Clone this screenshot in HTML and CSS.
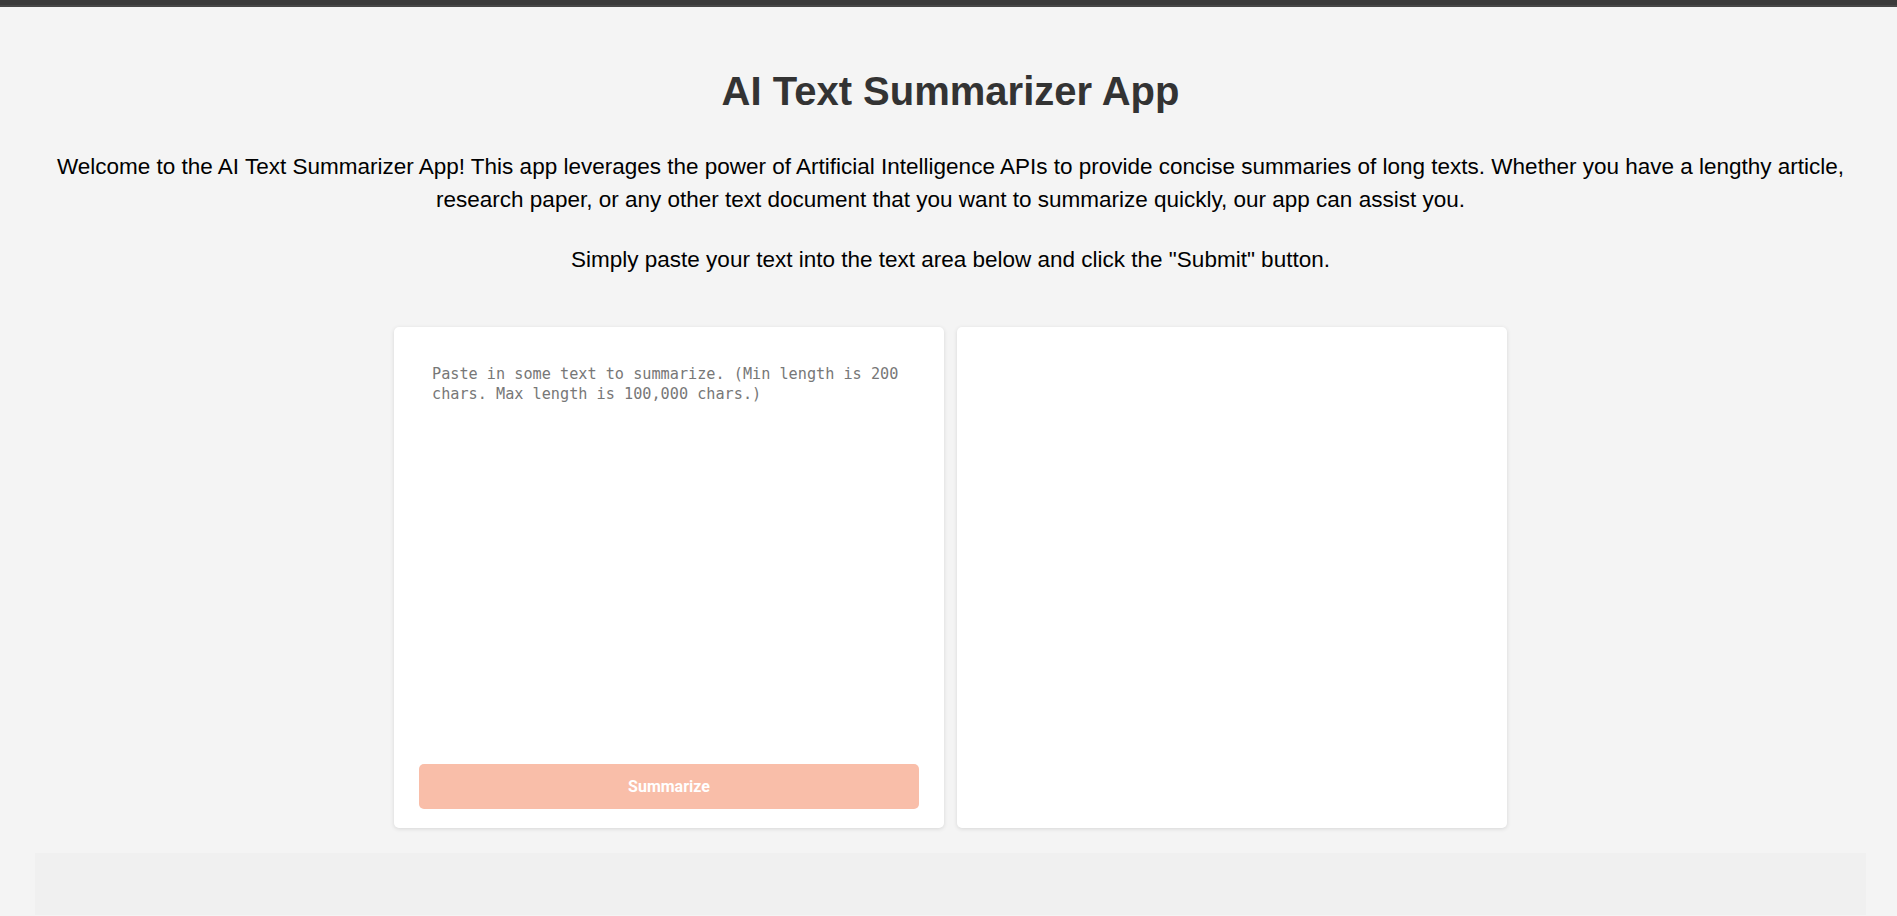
FILE: index.html
```html
<!DOCTYPE html>
<html lang="en">
<head>
<meta charset="utf-8">
<title>AI Text Summarizer App</title>
<link rel="stylesheet" href="styles.css">
</head>
<body>
<div class="topbar"></div>
<main class="page">
  <h1 class="title">AI Text Summarizer App</h1>
  <p class="intro">Welcome to the AI Text Summarizer App! This app leverages the power of Artificial Intelligence APIs to provide concise summaries of long texts. Whether you have a lengthy article, research paper, or any other text document that you want to summarize quickly, our app can assist you.</p>
  <p class="intro">Simply paste your text into the text area below and click the "Submit" button.</p>
  <div class="panels">
    <div class="card input-card">
      <textarea class="text-input" placeholder="Paste in some text to summarize. (Min length is 200 chars. Max length is 100,000 chars.)"></textarea>
      <button class="submit-btn" disabled>Summarize</button>
    </div>
    <div class="card output-card"></div>
  </div>
</main>
<footer class="footer"></footer>
</body>
</html>
```
FILE: styles.css
```css
* { box-sizing: border-box; }
html, body { margin: 0; padding: 0; }
body {
  background: #f4f4f4;
  font-family: "Liberation Sans", Arial, sans-serif;
  color: #000;
  overflow: hidden;
}
.topbar {
  height: 7px;
  background: #3b3b3b;
  border-bottom: 2px solid #474747;
}
.page {
  margin: 0 31px 0 35px;
  padding-top: 1px;
  text-align: center;
}
.title {
  font-size: 40px;
  font-weight: bold;
  color: #333;
  margin: 60px 0 0;
  line-height: 46px;
}
.intro {
  font-size: 22.5px;
  line-height: 33px;
  margin: 36px 0 0;
}
.intro + .intro { margin-top: 27px; }
.panels {
  display: flex;
  justify-content: center;
  gap: 13px;
  margin-top: 51px;
}
.card {
  width: 550px;
  height: 501px;
  background: #fff;
  border-radius: 5px;
  box-shadow: 0 1px 4px rgba(0, 0, 0, 0.12);
}
.input-card {
  display: flex;
  flex-direction: column;
  padding: 25px 25px 19px;
  gap: 20px;
}
.text-input {
  flex: 1;
  width: 100%;
  border: none;
  outline: none;
  resize: none;
  padding: 12px 13px;
  font-family: "DejaVu Sans Mono", monospace;
  font-size: 15.2px;
  line-height: 20px;
  color: #333;
  background: #fff;
}
.text-input::placeholder { color: #777; }
.submit-btn {
  height: 45px;
  width: 100%;
  border: none;
  border-radius: 5px;
  background: #f9bea9;
  color: #fff;
  font-family: Roboto, "Liberation Sans", sans-serif;
  font-weight: bold;
  font-size: 16px;
}
.footer {
  margin: 25px 31px 0 35px;
  height: 62px;
  background: #f0f0f0;
}
```
